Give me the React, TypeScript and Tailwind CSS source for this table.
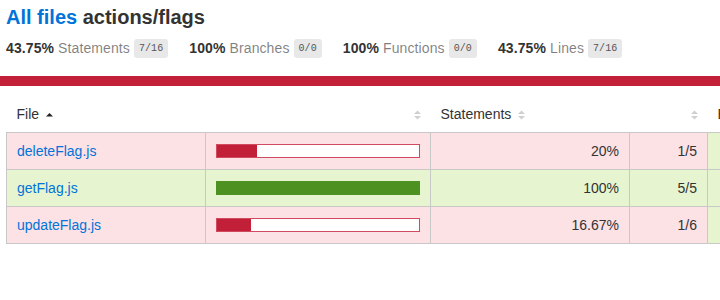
import React from 'react';

interface Metric {
  covered: number;
  total: number;
}

interface FileRow {
  name: string;
  statements: Metric;
  branches: Metric;
}

const rows: FileRow[] = [
  { name: 'deleteFlag.js', statements: { covered: 1, total: 5 }, branches: { covered: 0, total: 0 } },
  { name: 'getFlag.js', statements: { covered: 5, total: 5 }, branches: { covered: 0, total: 0 } },
  { name: 'updateFlag.js', statements: { covered: 1, total: 6 }, branches: { covered: 0, total: 0 } },
];

const pct = (m: Metric) => (m.total === 0 ? 100 : Math.round((m.covered / m.total) * 10000) / 100);
const isHigh = (m: Metric) => pct(m) >= 80;

function SortBoth() {
  return (
    <svg width="7" height="10" viewBox="0 0 7 10" className="ml-[7px] inline-block align-middle">
      <path d="M0 4 L3.5 0.5 L7 4 Z" fill="#cfcfcf" />
      <path d="M0 6 L7 6 L3.5 9.5 Z" fill="#cfcfcf" />
    </svg>
  );
}

function SortUp() {
  return (
    <svg width="7" height="10" viewBox="0 0 7 10" className="ml-[7px] inline-block align-middle">
      <path d="M0 6.5 L3.5 3 L7 6.5 Z" fill="#222" />
    </svg>
  );
}

function Stat({ value, label, fraction }: { value: string; label: string; fraction: string }) {
  return (
    <div className="flex items-center">
      <span className="font-bold">{value}</span>
      <span className="ml-[4px] text-black/50">{label}</span>
      <span className="ml-[4px] rounded-[3px] bg-[#E8E8E8] px-[5px] py-[4px] font-['Liberation_Mono',monospace] text-[10px] leading-[11px] text-[#555]">
        {fraction}
      </span>
    </div>
  );
}

const cell = 'border-r border-[#c8c8c8] px-[10px] py-[10px] leading-4';

export default function App() {
  return (
    <div className="h-[300px] w-[720px] overflow-hidden bg-white font-['Liberation_Sans',Arial,sans-serif] text-[14px] text-[#333]">
      <div className="px-[6px] pt-[5px] pb-[18px]">
        <h1 className="text-[20px] font-bold leading-6">
          <a className="text-[#0074D9]">All files</a> actions/flags
        </h1>
        <div className="mt-[9px] flex h-5 items-center gap-[21px] leading-5 tracking-[0.1px]">
          <Stat value="43.75%" label="Statements" fraction="7/16" />
          <Stat value="100%" label="Branches" fraction="0/0" />
          <Stat value="100%" label="Functions" fraction="0/0" />
          <Stat value="43.75%" label="Lines" fraction="7/16" />
        </div>
      </div>
      <div className="h-[10px] bg-[#C21F39]" />
      <div className="px-[6px] pt-[10px]">
        <table className="w-[900px] table-fixed border-collapse">
          <colgroup>
            <col className="w-[199px]" />
            <col className="w-[225px]" />
            <col className="w-[199px]" />
            <col className="w-[78px]" />
            <col className="w-[199px]" />
          </colgroup>
          <thead>
            <tr className="text-left">
              <th className="px-[10px] py-[10px] font-normal leading-4 whitespace-nowrap">
                File<SortUp />
              </th>
              <th className="px-[10px] py-[10px] text-right font-normal leading-4">
                <SortBoth />
              </th>
              <th className="px-[10px] py-[10px] font-normal leading-4 whitespace-nowrap">
                Statements<SortBoth />
              </th>
              <th className="px-[10px] py-[10px] text-right font-normal leading-4">
                <SortBoth />
              </th>
              <th className="px-[10px] py-[10px] font-normal leading-4 whitespace-nowrap">
                Branches<SortBoth />
              </th>
            </tr>
          </thead>
          <tbody className="border border-[#c8c8c8]">
            {rows.map(row => {
              const p = pct(row.statements);
              const high = isHigh(row.statements);
              const bg = high ? 'bg-[#E6F5D0]' : 'bg-[#FCE1E5]';
              const branchBg = isHigh(row.branches) ? 'bg-[#E6F5D0]' : 'bg-[#FCE1E5]';
              return (
                <tr key={row.name} className="border-b border-[#c8c8c8]">
                  <td className={`${bg} ${cell}`}>
                    <a className="text-[#0074D9]">{row.name}</a>
                  </td>
                  <td className={`${bg} ${cell}`}>
                    <div className={`flex h-[14px] border ${high ? 'border-[#4d9221]' : 'border-[#d04a60]'}`}>
                      <div className={high ? 'bg-[#4d9221]' : 'bg-[#C21F39]'} style={{ width: `${p}%` }} />
                      <div className="flex-1 bg-white" />
                    </div>
                  </td>
                  <td className={`${bg} ${cell} text-right`}>{p}%</td>
                  <td className={`${bg} ${cell} text-right`}>
                    {row.statements.covered}/{row.statements.total}
                  </td>
                  <td className={`${branchBg} ${cell} text-right`}>{pct(row.branches)}%</td>
                </tr>
              );
            })}
          </tbody>
        </table>
      </div>
    </div>
  );
}
